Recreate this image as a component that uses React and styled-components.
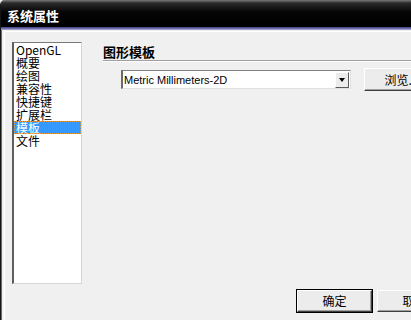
import React from 'react'
import styled, { createGlobalStyle } from 'styled-components'

const GlobalStyle = createGlobalStyle`
    html, body {
        margin: 0;
        padding: 0;
        background: #f0f0f0;
        overflow: hidden;
    }
`

const CJK = `"Noto Sans CJK SC", "Liberation Sans", sans-serif`

const Window = styled.div`
    width: 460px;
    height: 320px;
    background: #f0f0f0;
    border-left: 1px solid #151515;
    box-shadow: inset 1px 0 0 #6a6a6a;
    border-top-left-radius: 5px;
    overflow: hidden;
    font-family: ${CJK};
`

const TitleBar = styled.div`
    height: 27px;
    display: flex;
    align-items: center;
    padding-left: 6px;
    background: linear-gradient(to bottom, #7a7a7a 0, #2a2a2a 3px, #050505 12px, #000 27px);
    color: #fff;
    font-size: 13px;
    font-weight: bold;
    line-height: 13px;
    text-shadow: 1px 1px 0 #000;
    padding-top: 4px;
    box-sizing: border-box;
`

const Accent = styled.div`
    height: 3px;
    background: linear-gradient(to bottom, #3c3c7a, #7b7bb8 60%, #b0b0d8);
`

const Body = styled.div`
    padding: 1px 0 0 3px;
`

const Inner = styled.div`
    display: flex;
    flex-direction: column;
    border-top: 1px solid #ffffff;
    border-left: 1px solid #ffffff;
    padding: 10px 9px 0 7px;
    height: 300px;
`

const MainRow = styled.div`
    display: flex;
`

const List = styled.ul`
    width: 70px;
    height: 242px;
    box-sizing: border-box;
    margin: 0;
    padding: 0;
    list-style: none;
    background: #fff;
    border-top: 1px solid #7a7a7a;
    border-left: 2px solid #5e5e5e;
    border-right: 1px solid #d6d6d6;
    border-bottom: 1px solid #d6d6d6;
`

const Item = styled.li`
    height: 13px;
    line-height: 13px;
    font-size: 12px;
    padding-left: 2px;
    box-sizing: border-box;
    color: ${p => (p.$selected ? '#fff' : '#000')};
    background: ${p => (p.$selected ? '#3399ff' : 'transparent')};
    outline: ${p => (p.$selected ? '1px dotted #e89a3c' : 'none')};
    outline-offset: -1px;
    white-space: nowrap;
`

const Panel = styled.div`
    flex: 1;
    margin-left: 21px;
    display: flex;
    flex-direction: column;
`

const Header = styled.div`
    height: 19px;
    line-height: 19px;
    font-size: 13px;
    font-weight: bold;
    color: #000;
    border-bottom: 1px solid #a0a0a0;
    box-shadow: 0 1px 0 #ffffff;
    box-sizing: border-box;
    padding-top: 0;
`

const TemplateRow = styled.div`
    display: flex;
    align-items: center;
    margin-top: 7px;
    height: 23px;
`

const Select = styled.div`
    margin-left: 18px;
    width: 230px;
    height: 19px;
    box-sizing: border-box;
    display: flex;
    align-items: center;
    background: #fff;
    border-top: 1px solid #808080;
    border-left: 2px solid #6a6a6a;
    border-right: 1px solid #e0e0e0;
    border-bottom: 1px solid #e0e0e0;
`

const SelectText = styled.span`
    flex: 1;
    padding-left: 1px;
    font-family: "Liberation Sans", Arial, sans-serif;
    font-size: 11px;
    color: #000;
    white-space: nowrap;
`

const DropButton = styled.div`
    width: 14px;
    height: 16px;
    margin-right: 1px;
    box-sizing: border-box;
    display: flex;
    align-items: center;
    justify-content: center;
    background: #ececec;
    border-top: 1px solid #fff;
    border-left: 1px solid #fff;
    border-right: 1px solid #5a5a5a;
    border-bottom: 1px solid #5a5a5a;
`

const Arrow = styled.span`
    width: 0;
    height: 0;
    border-left: 3.5px solid transparent;
    border-right: 3.5px solid transparent;
    border-top: 4px solid #000;
`

const Button = styled.button`
    width: 75px;
    height: ${p => p.$h || 23}px;
    box-sizing: border-box;
    margin: 0;
    margin-left: ${p => p.$ml || 0}px;
    padding: 0;
    font-family: ${CJK};
    font-size: 12px;
    line-height: 12px;
    color: #000;
    background: #ececec;
    border-top: 1px solid #ffffff;
    border-left: 1px solid #ffffff;
    border-right: 1px solid #404040;
    border-bottom: 1px solid #404040;
    box-shadow: inset -1px -1px 0 #a0a0a0;
    outline: ${p => (p.$default ? '1px solid #000' : 'none')};
    outline-offset: 0;
`

const Footer = styled.div`
    display: flex;
    justify-content: flex-end;
    gap: 5px;
    margin-top: 6px;
`

const items = ['OpenGL', '概要', '绘图', '兼容性', '快捷键', '扩展栏', '模板', '文件']

export default function App() {
    return (
        <>
            <GlobalStyle />
            <Window>
                <TitleBar>系统属性</TitleBar>
                <Accent />
                <Body>
                    <Inner>
                        <MainRow>
                            <List>
                                {items.map(name => (
                                    <Item key={name} $selected={name === '模板'}>
                                        {name}
                                    </Item>
                                ))}
                            </List>
                            <Panel>
                                <Header>图形模板</Header>
                                <TemplateRow>
                                    <Select>
                                        <SelectText>Metric Millimeters-2D</SelectText>
                                        <DropButton>
                                            <Arrow />
                                        </DropButton>
                                    </Select>
                                    <Button $ml={13}>浏览...</Button>
                                </TemplateRow>
                            </Panel>
                        </MainRow>
                        <Footer>
                            <Button $h={22} $default>确定</Button>
                            <Button $h={22}>取消</Button>
                        </Footer>
                    </Inner>
                </Body>
            </Window>
        </>
    )
}
